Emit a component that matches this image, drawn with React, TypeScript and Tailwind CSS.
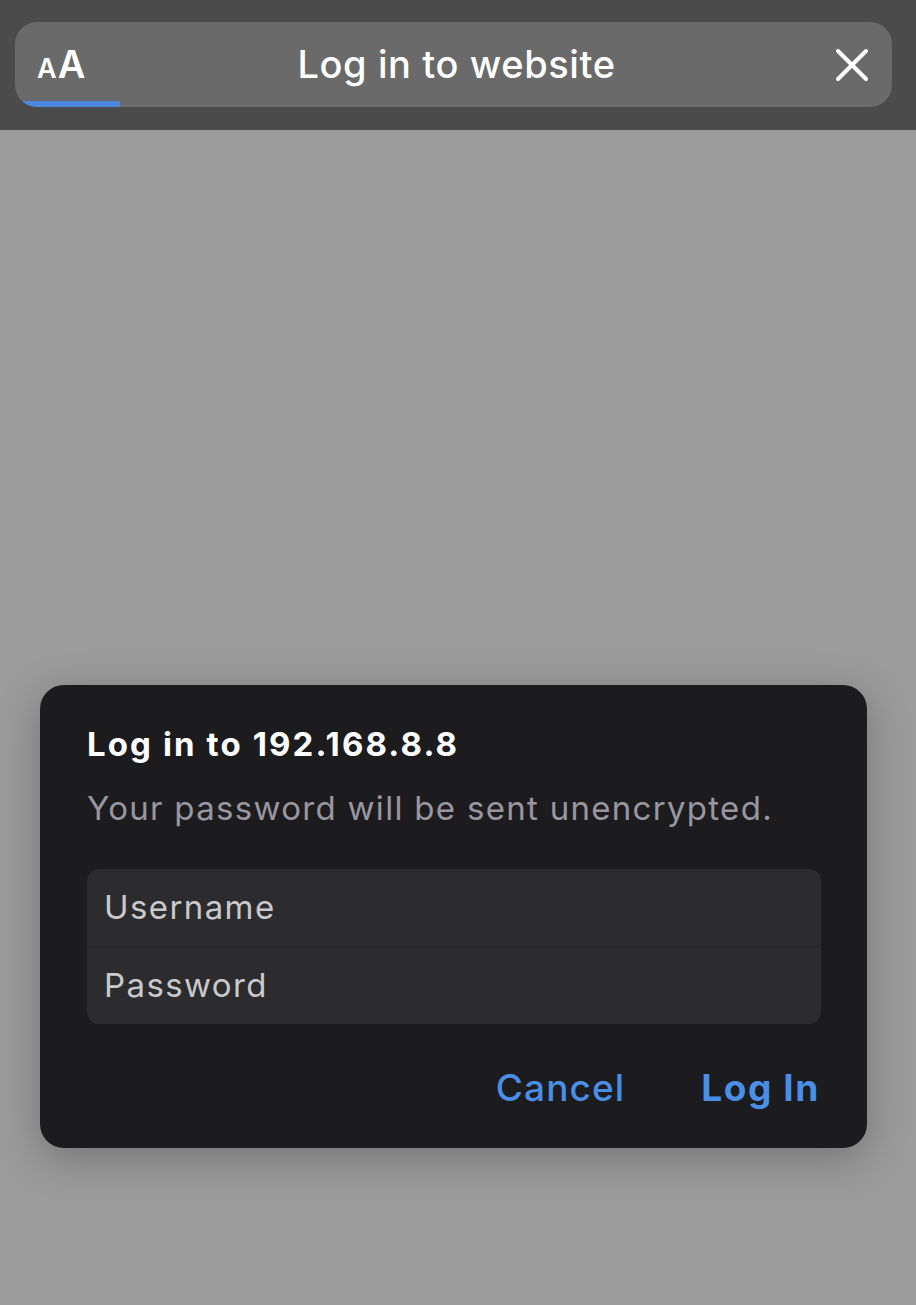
import React from "react";

export default function App() {
  const font = { fontFamily: "Inter, 'Noto Sans', sans-serif" };
  return (
    <div className="w-[916px] h-[1305px] bg-[#9b9b9b] flex flex-col overflow-hidden" style={font}>
      <div className="h-[130px] bg-[#4b4b4b] pl-[15px] pr-[24px] pt-[22px] shrink-0">
        <div className="relative h-[85px] rounded-[22px] bg-[#6a6a6a] flex items-center overflow-hidden">
          <div className="w-[100px] pl-[22px] text-white font-semibold flex items-baseline">
            <span className="text-[27px] tracking-[1px]">A</span>
            <span className="text-[38px]">A</span>
          </div>
          <div className="flex-1 text-center text-white text-[38px] font-medium tracking-[0.6px] pl-[6px]">Log in to website</div>
          <div className="w-[100px] flex justify-end pr-[23px]">
            <svg width="34" height="34" viewBox="0 0 34 34" fill="none" stroke="white" strokeWidth="4" strokeLinecap="round">
              <path d="M3 3 L31 31 M31 3 L3 31" />
            </svg>
          </div>
          <div className="absolute left-[7px] bottom-[0px] w-[98px] h-[6px] bg-[#4a88e0] rounded-bl-[22px]" />
        </div>
      </div>
      <div className="flex-1 flex flex-col px-[40px] pt-[555px]">
        <div className="w-[827px] h-[463px] rounded-[24px] bg-[#1c1c1e] shadow-[0_10px_40px_rgba(0,0,0,0.25)] px-[47px] pt-[38px]">
          <div className="text-white text-[33px] font-bold leading-[42px] tracking-[2.1px]">Log in to 192.168.8.8</div>
          <div className="mt-[22px] text-[#9a96a0] text-[33px] leading-[42px] tracking-[1.3px]">Your password will be sent unencrypted.</div>
          <div className="mt-[40px] w-[734px] rounded-[12px] bg-[#2c2c2e] flex flex-col">
            <div className="h-[78px] flex items-center px-[17px] text-[#c9c9cc] text-[33px] tracking-[1.4px] border-b border-[#262628]">Username</div>
            <div className="h-[77px] flex items-center px-[17px] text-[#c9c9cc] text-[33px] tracking-[1.4px]">Password</div>
          </div>
          <div className="mt-[42px] flex justify-end gap-[76px] pr-[0px] text-[#4a8fe5] text-[37px] leading-[44px]">
            <span className="font-medium tracking-[1.1px]">Cancel</span>
            <span className="font-bold tracking-[1.6px]">Log In</span>
          </div>
        </div>
      </div>
    </div>
  );
}
